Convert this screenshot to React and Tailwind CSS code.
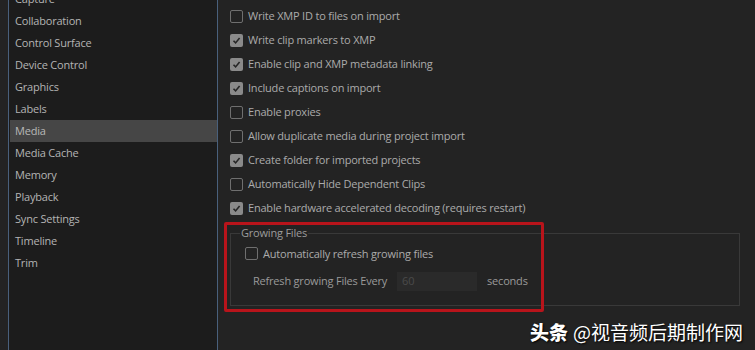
const categories = [
  'Capture',
  'Collaboration',
  'Control Surface',
  'Device Control',
  'Graphics',
  'Labels',
  'Media',
  'Media Cache',
  'Memory',
  'Playback',
  'Sync Settings',
  'Timeline',
  'Trim',
]

const options = [
  { label: 'Write XMP ID to files on import', checked: false },
  { label: 'Write clip markers to XMP', checked: true },
  { label: 'Enable clip and XMP metadata linking', checked: true },
  { label: 'Include captions on import', checked: true },
  { label: 'Enable proxies', checked: false },
  { label: 'Allow duplicate media during project import', checked: false },
  { label: 'Create folder for imported projects', checked: true },
  { label: 'Automatically Hide Dependent Clips', checked: false },
  { label: 'Enable hardware accelerated decoding (requires restart)', checked: true },
]

function Checkbox({ checked }) {
  if (checked) {
    return (
      <span className="flex h-[13px] w-[13px] shrink-0 items-center justify-center rounded-[2px] bg-[#8a8a8a]">
        <svg width="9" height="9" viewBox="0 0 9 9" fill="none">
          <path d="M1.5 4.8 L3.6 6.9 L7.6 2" stroke="#262626" strokeWidth="1.6" />
        </svg>
      </span>
    )
  }
  return <span className="h-[13px] w-[13px] shrink-0 rounded-[2px] border-[1.5px] border-[#6f6f6f]" />
}

export default function App() {
  return (
    <div
      className="relative flex h-[350px] w-[755px] overflow-hidden bg-[#232323] text-[11px] tracking-[-0.2px] text-[#ababab]"
      style={{ fontFamily: '"Open Sans", "Noto Sans", sans-serif' }}
    >
      {/* category list */}
      <div className="ml-2 h-full w-[210px] shrink-0 border-x border-[#49607c] bg-[#1c1c1c] pl-[1px]">
        <div className="-mt-[12px]">
          {categories.map((c) => (
            <div
              key={c}
              className={`flex h-[22px] items-center pl-[5px] ${c === 'Media' ? 'bg-[#464646] text-[#b8b8b8]' : 'text-[#b4b4b4]'}`}
            >
              {c}
            </div>
          ))}
        </div>
      </div>

      {/* settings */}
      <div className="flex-1 pl-3 pt-1">
        {options.map((o) => (
          <div key={o.label} className="flex h-6 items-center gap-[5px]">
            <Checkbox checked={o.checked} />
            <span>{o.label}</span>
          </div>
        ))}

        <fieldset className="mt-[5px] h-[81px] w-[510px] border border-[#393939] pl-[9px]">
          <legend className="px-[1px] text-[#9c9c9c]">Growing Files</legend>
          <div className="pl-[5px] pt-[4px]">
            <div className="flex items-center gap-[5px]">
              <Checkbox checked={false} />
              <span>Automatically refresh growing files</span>
            </div>
            <div className="mt-[10px] flex items-center pl-[8px]">
              <span className="text-[#9a9a9a]">Refresh growing Files Every</span>
              <div className="ml-[10px] flex h-[19px] w-[80px] items-center bg-[#2a2a2a] pl-[5px] text-[#4a4a4a]">60</div>
              <span className="ml-[10px] text-[#9a9a9a]">seconds</span>
            </div>
          </div>
        </fieldset>
      </div>

      {/* highlight annotation */}
      <div className="pointer-events-none absolute left-[224px] top-[222px] h-[90px] w-[320px] rounded-[2px] border-[3px] border-[#b8141b]" />

      {/* watermark */}
      <div
        className="absolute left-[530px] top-[322px] flex items-baseline gap-[5px] text-[19px] leading-none tracking-normal text-white [text-shadow:1px_1px_2px_#000]"
        style={{ fontFamily: '"Noto Sans CJK SC", sans-serif' }}
      >
        <span className="font-black">头条</span>
        <span>@视音频后期制作网</span>
      </div>
    </div>
  )
}
